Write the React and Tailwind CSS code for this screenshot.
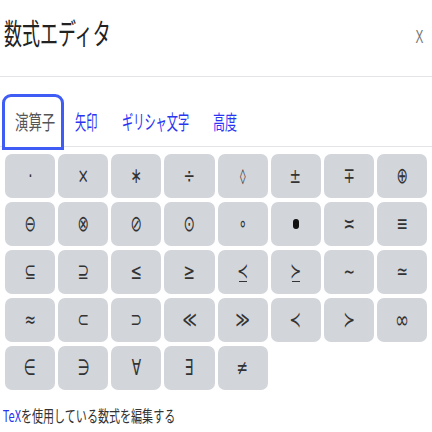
const ROWS = [
  ["·", "×", "∗", "÷", "◊", "±", "∓", "⊕"],
  ["⊖", "⊗", "⊘", "⊙", "∘", "●", "≍", "≡"],
  ["⊆", "⊇", "≤", "≥", "≺_", "≻_", "∼", "≃"],
  ["≈", "⊂", "⊃", "≪", "≫", "≺", "≻", "∞"],
  ["∈", "∋", "∀", "∃", "≠"],
];

const JP = "font-['Noto_Sans_CJK_JP','Noto_Sans',sans-serif]";

function Tab({ label, box, text, active }) {
  return (
    <div className={`relative shrink-0 ${box}`}>
      <span
        className={`absolute block origin-left whitespace-nowrap text-[20px] leading-[24px] ${JP} ${text} ${
          active ? "text-[#555]" : "text-[#2a35f2]"
        }`}
      >
        {label}
      </span>
    </div>
  );
}

function Symbol({ s }) {
  if (s.endsWith("_")) {
    return (
      <span className="flex flex-col items-center">
        <span className="block scale-x-[0.62] text-[21px] leading-[18px]">{s[0]}</span>
        <span className="mt-[1px] block h-[1px] w-[8px] bg-[#333]" />
      </span>
    );
  }
  if (s === "●") {
    return <span className="block h-[10px] w-[6px] rounded-full bg-[#111]" />;
  }
  if (s === "◊") {
    return <span className="block scale-x-[0.75] text-[15px] leading-[20px]">{s}</span>;
  }
  if (s === "∞") {
    return <span className="block scale-x-[0.7] text-[24px] leading-[24px]">{s}</span>;
  }
  return <span className="block scale-x-[0.62] text-[22px] leading-[24px]">{s}</span>;
}

export default function App() {
  return (
    <div className="h-[432px] w-[432px] overflow-hidden bg-white">
      <div className="flex h-[77px] items-start justify-between border-b border-[#e2e4e8] px-[4px]">
        <span
          className={`mt-[14px] block origin-left scale-x-[0.62] whitespace-nowrap text-[29px] leading-[36px] text-[#222] ${JP}`}
        >
          数式エディタ
        </span>
        <span className="mr-[2px] mt-[27px] block scale-x-[0.62] font-['Liberation_Sans',sans-serif] text-[19px] leading-[20px] text-[#777]">
          X
        </span>
      </div>

      <div className="mt-[17px] flex h-[53px] items-start border-b border-[#e2e4e8] pl-[2px]">
        <Tab
          label="演算子"
          active
          box="z-10 h-[56px] w-[62px] rounded-t-[9px] border-[3px] border-[#3f5cf4] bg-white"
          text="left-[10px] top-[13px] scale-x-[0.67]"
        />
        <Tab label="矢印" box="h-[51px] w-[47px]" text="left-[11px] top-[16px] scale-x-[0.56]" />
        <Tab label="ギリシャ文字" box="h-[51px] w-[92px]" text="left-[11px] top-[16px] scale-x-[0.56]" />
        <Tab label="高度" box="h-[51px] w-[60px]" text="left-[10px] top-[16px] scale-x-[0.6]" />
      </div>

      <div className="mt-[7px] grid grid-cols-8 gap-x-[3px] gap-y-[4px] px-[5px]">
        {ROWS.flat().map((s, i) => (
          <div
            key={i}
            className="flex h-[44px] items-center justify-center rounded-[7px] bg-[#d2d5da] font-['DejaVu_Sans',sans-serif] text-[#333]"
          >
            <Symbol s={s} />
          </div>
        ))}
      </div>

      <p
        className={`mt-[13px] block origin-left scale-x-[0.69] whitespace-nowrap px-[4px] text-[16px] leading-[24px] text-[#333] ${JP}`}
      >
        <span className="text-[#2a35f2]">TeX</span>を使用している数式を編集する
      </p>
    </div>
  );
}
